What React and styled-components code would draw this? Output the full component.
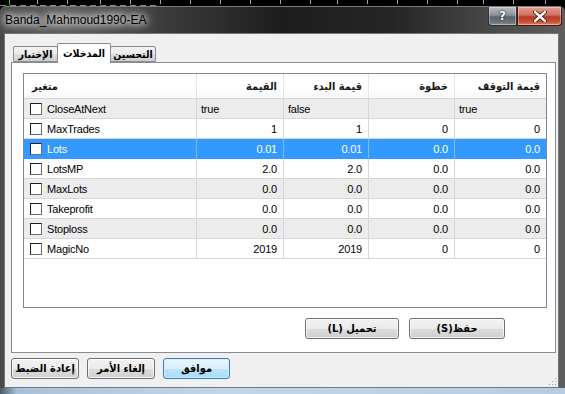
import React from "react";
import styled, { createGlobalStyle } from "styled-components";

const GlobalStyle = createGlobalStyle`
  html, body {
    margin: 0;
    padding: 0;
    background: #000;
  }
  body {
    width: 565px;
    height: 394px;
    overflow: hidden;
    font-family: "Liberation Sans", "DejaVu Sans", sans-serif;
  }
`;

const ARABIC = `"DejaVu Sans Condensed", "DejaVu Sans", sans-serif`;

const Screen = styled.div`
  width: 565px;
  height: 394px;
  display: flex;
  flex-direction: column;
  background: #000;
`;

const ChartStrip = styled.svg`
  display: block;
  flex: none;
`;

const Frame = styled.div`
  flex: 1;
  display: flex;
  flex-direction: column;
  min-height: 0;
  padding: 0 6px 0 4px;
  border-top: 1px solid #7a7a7a;
  border-radius: 6px 6px 0 0;
  background: linear-gradient(
    to right,
    #4a4a4a 0%,
    #5c5c5c 12%,
    #3a3a3a 30%,
    #1d1d1d 50%,
    #262626 70%,
    #4b4b4b 88%,
    #5e5e5e 100%
  );
`;

const TitleBar = styled.div`
  height: 26px;
  flex: none;
  display: flex;
  justify-content: space-between;
  align-items: flex-start;
`;

const TitleText = styled.div`
  align-self: center;
  margin-left: 1px;
  font-size: 12px;
  color: #000;
  text-shadow: 0 0 6px #fff, 0 0 10px #fff, 0 0 14px rgba(255, 255, 255, 0.9);
`;

const CaptionGroup = styled.div`
  display: flex;
  margin-right: -3px;
`;

const CaptionButton = styled.div`
  width: ${(p) => p.$w}px;
  height: 19px;
  box-sizing: border-box;
  display: flex;
  align-items: center;
  justify-content: center;
  border: 1px solid ${(p) => (p.$close ? "#4a1810" : "#2f3338")};
  border-top: none;
  border-radius: ${(p) => (p.$close ? "0 0 4px 0" : "0 0 0 4px")};
  box-shadow: inset 0 0 0 1px rgba(255, 255, 255, 0.35);
  background: ${(p) =>
    p.$close
      ? "linear-gradient(to bottom, #e4a08f 0%, #d0705c 45%, #b73a24 55%, #c9533b 85%, #e08a6a 100%)"
      : "linear-gradient(to bottom, #b9bec4 0%, #8c9299 45%, #5d646c 55%, #6c737b 85%, #8a9199 100%)"};
  font-family: "DejaVu Sans", sans-serif;
  font-weight: bold;
  font-size: 12px;
  color: #fff;
  text-shadow: 0 0 2px #222, 0 0 1px #000;
`;

const Client = styled.div`
  flex: 1;
  position: relative;
  display: flex;
  flex-direction: column;
  min-height: 0;
  background: #f0f0f0;
  border: 1px solid #6f7780;
  padding: 9px 2px 0 6px;
`;

const TabStrip = styled.div`
  display: flex;
  align-items: flex-end;
  height: 19px;
  padding-left: 2px;
  position: relative;
  z-index: 1;
`;

const Tab = styled.div`
  width: ${(p) => p.$w}px;
  height: ${(p) => (p.$active ? 20 : 16)}px;
  box-sizing: border-box;
  margin-bottom: ${(p) => (p.$active ? -1 : 0)}px;
  margin-left: ${(p) => (p.$first ? 0 : -1)}px;
  display: flex;
  align-items: center;
  justify-content: center;
  padding-bottom: ${(p) => (p.$active ? 2 : 0)}px;
  border: 1px solid #898c95;
  border-bottom: ${(p) => (p.$active ? "none" : "1px solid #898c95")};
  border-radius: 2px 2px 0 0;
  background: ${(p) =>
    p.$active
      ? "#fff"
      : "linear-gradient(to bottom, #f2f2f2 0%, #ebebeb 50%, #dddddd 51%, #cfcfcf 100%)"};
  font-family: ${ARABIC};
  font-weight: bold;
  font-size: 10.5px;
  color: #000;
  white-space: nowrap;
  position: relative;
  z-index: ${(p) => (p.$active ? 2 : 1)};
`;

const Panel = styled.div`
  height: 291px;
  box-sizing: border-box;
  flex: none;
  border: 1px solid #898c95;
  background: #fff;
  padding: 10px 8px 0 11px;
  display: flex;
  flex-direction: column;
`;

const ListView = styled.div`
  height: 235px;
  box-sizing: border-box;
  flex: none;
  border: 1px solid #828790;
  background: #fff;
  overflow: hidden;
`;

const COLS = "173px 87px 85px 86px 1fr";

const HeaderRow = styled.div`
  display: grid;
  grid-template-columns: ${COLS};
  height: 25px;
  box-sizing: border-box;
  border-bottom: 1px solid #d5d5d5;
  background: linear-gradient(to bottom, #ffffff 0%, #ffffff 55%, #f6f7f8 100%);
`;

const HeaderCell = styled.div`
  display: flex;
  align-items: center;
  justify-content: ${(p) => (p.$left ? "flex-start" : "flex-end")};
  padding: 0 ${(p) => (p.$left ? 0 : 6)}px 0 ${(p) => (p.$left ? 8 : 0)}px;
  border-right: ${(p) => (p.$last ? "none" : "1px solid #e3e5e8")};
  font-family: ${ARABIC};
  font-weight: bold;
  font-size: 11px;
  color: #1a1a1a;
  white-space: nowrap;
`;

const Row = styled.div`
  display: grid;
  grid-template-columns: ${COLS};
  height: 20px;
  box-sizing: border-box;
  border-bottom: 1px solid ${(p) => (p.$selected ? "#3399ff" : "#d6d6d6")};
  background: ${(p) => (p.$selected ? "#3399ff" : p.$striped ? "#ececec" : "#fff")};
  color: ${(p) => (p.$selected ? "#fff" : "#000")};
`;

const Cell = styled.div`
  display: flex;
  align-items: center;
  justify-content: ${(p) => (p.$right ? "flex-end" : "flex-start")};
  padding: 0 ${(p) => (p.$right ? 6 : 0)}px 0 ${(p) => (p.$right ? 0 : 4)}px;
  border-right: ${(p) =>
    p.$last ? "none" : `1px solid ${p.$selected ? "#7cbcff" : "#d6d6d6"}`};
  font-size: 11px;
  letter-spacing: -0.2px;
  white-space: nowrap;
`;

const NameCell = styled(Cell)`
  padding-left: 6px;
  gap: 5px;
`;

const CheckBox = styled.span`
  width: 12px;
  height: 12px;
  box-sizing: border-box;
  flex: none;
  background: #fff;
  border: 1px solid;
  border-color: #1e1e1e #6e6e6e #6e6e6e #1e1e1e;
`;

const PanelButtons = styled.div`
  display: flex;
  justify-content: flex-end;
  gap: 10px;
  margin-top: 10px;
  padding-right: 42px;
`;

const Button = styled.div`
  width: ${(p) => p.$w}px;
  height: 21px;
  box-sizing: border-box;
  display: flex;
  align-items: center;
  justify-content: center;
  border: 1px solid ${(p) => (p.$default ? "#3c7fb1" : "#707070")};
  border-radius: 3px;
  box-shadow: inset 0 0 0 1px ${(p) => (p.$default ? "rgba(210,240,255,0.9)" : "rgba(255,255,255,0.7)")};
  background: ${(p) =>
    p.$default
      ? "linear-gradient(to bottom, #eaf6fd 0%, #d9f0fc 50%, #bee6fd 51%, #a7d9f5 100%)"
      : "linear-gradient(to bottom, #f2f2f2 0%, #ebebeb 50%, #dddddd 51%, #cfcfcf 100%)"};
  font-family: ${ARABIC};
  font-weight: bold;
  font-size: 11px;
  color: #000;
  direction: rtl;
  white-space: nowrap;
`;

const ButtonBar = styled.div`
  display: flex;
  gap: 8px;
  margin-top: 5px;
`;

const Grip = styled.svg`
  position: absolute;
  right: 1px;
  bottom: 1px;
`;

const BottomEdge = styled.div`
  height: 6px;
  flex: none;
  background: linear-gradient(to right, #4a5866 0%, #a9c1d8 3%, #c3d6e8 40%, #b7cce1 100%);
`;

const TICKS = [37, 67, 100, 130, 160, 190, 220, 250, 280, 310, 337, 367, 397, 427, 457, 483, 513, 545];

const ROWS = [
  { name: "CloseAtNext", v: ["true", "false", "", "true"], text: true },
  { name: "MaxTrades", v: ["1", "1", "0", "0"] },
  { name: "Lots", v: ["0.01", "0.01", "0.0", "0.0"], selected: true },
  { name: "LotsMP", v: ["2.0", "2.0", "0.0", "0.0"] },
  { name: "MaxLots", v: ["0.0", "0.0", "0.0", "0.0"] },
  { name: "Takeprofit", v: ["0.0", "0.0", "0.0", "0.0"] },
  { name: "Stoploss", v: ["0.0", "0.0", "0.0", "0.0"] },
  { name: "MagicNo", v: ["2019", "2019", "0", "0"] },
];

const HEADERS = ["القيمة", "قيمة البدء", "خطوة", "قيمة التوقف"];

const App = () => {
  return (
    <Screen>
      <GlobalStyle />
      <ChartStrip width="565" height="6" viewBox="0 0 565 6">
        <rect width="565" height="6" fill="#000" />
        <line x1="0" y1="5.5" x2="160" y2="5.5" stroke="#8a8a8a" strokeDasharray="6 4" />
        <line x1="9.5" y1="0" x2="9.5" y2="5" stroke="#1fd41f" />
        {TICKS.map((x) => (
          <line key={x} x1={x + 0.5} y1="0" x2={x + 0.5} y2="4" stroke="#a8a8a8" />
        ))}
      </ChartStrip>
      <Frame>
        <TitleBar>
          <TitleText>Banda_Mahmoud1990-EA</TitleText>
          <CaptionGroup>
            <CaptionButton $w={29}>?</CaptionButton>
            <CaptionButton $w={45} $close>
              <svg width="14" height="11" viewBox="0 0 14 11">
                <path d="M2 1 L12 10 M12 1 L2 10" stroke="#3a0c05" strokeWidth="4" strokeLinecap="round" />
                <path d="M2 1 L12 10 M12 1 L2 10" stroke="#fff" strokeWidth="2.4" strokeLinecap="round" />
              </svg>
            </CaptionButton>
          </CaptionGroup>
        </TitleBar>
        <Client>
          <TabStrip>
            <Tab $w={45} $first>الإختبار</Tab>
            <Tab $w={54} $active>المدخلات</Tab>
            <Tab $w={46}>التحسين</Tab>
          </TabStrip>
          <Panel>
            <ListView>
              <HeaderRow>
                <HeaderCell $left>متغير</HeaderCell>
                {HEADERS.map((h, i) => (
                  <HeaderCell key={h} $last={i === HEADERS.length - 1}>
                    {h}
                  </HeaderCell>
                ))}
              </HeaderRow>
              {ROWS.map((r, i) => (
                <Row key={r.name} $striped={i % 2 === 0} $selected={r.selected}>
                  <NameCell $selected={r.selected}>
                    <CheckBox />
                    {r.name}
                  </NameCell>
                  {r.v.map((val, j) => (
                    <Cell key={j} $right={!r.text} $selected={r.selected} $last={j === 3}>
                      {val}
                    </Cell>
                  ))}
                </Row>
              ))}
            </ListView>
            <PanelButtons>
              <Button $w={94}>تحميل (L)</Button>
              <Button $w={96}>حفظ(S)</Button>
            </PanelButtons>
          </Panel>
          <ButtonBar>
            <Button $w={68}>إعادة الضبط</Button>
            <Button $w={68}>إلغاء الأمر</Button>
            <Button $w={67} $default>موافق</Button>
          </ButtonBar>
          <Grip width="10" height="10" viewBox="0 0 10 10">
            {[
              [8, 2],
              [8, 5],
              [5, 5],
              [8, 8],
              [5, 8],
              [2, 8],
            ].map(([x, y]) => (
              <rect key={`${x}-${y}`} x={x} y={y} width="1" height="1" fill="#a0a0a0" />
            ))}
          </Grip>
        </Client>
      </Frame>
      <BottomEdge />
    </Screen>
  );
};

export default App;
